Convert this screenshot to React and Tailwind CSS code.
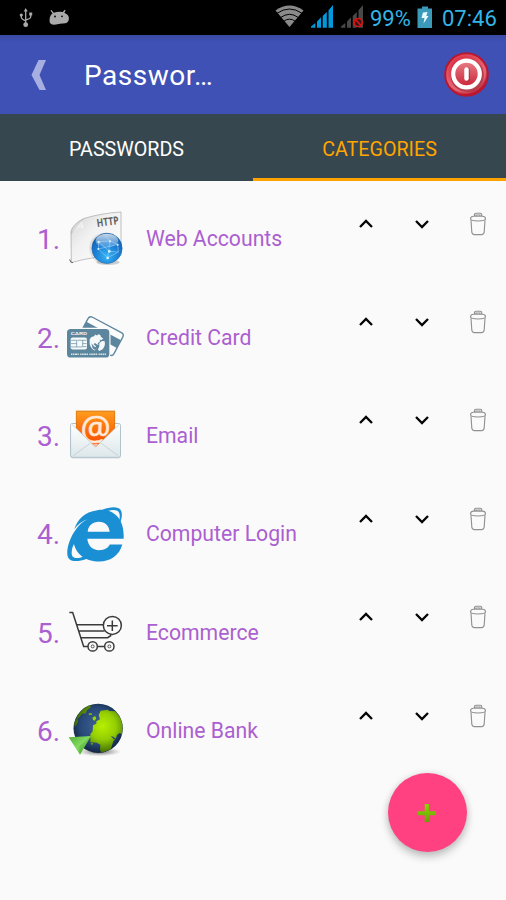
import React from "react";

function WebIcon() {
  return (
    <svg className="h-16 w-15" viewBox="138 33 180 192">
      <defs>
        <linearGradient id="paper" x1="0" y1="0" x2="1" y2="1">
          <stop offset="0" stopColor="#d2d2d2" />
          <stop offset="0.4" stopColor="#f1f1f1" />
          <stop offset="1" stopColor="#fff" />
        </linearGradient>
        <radialGradient id="ball" cx="0.5" cy="0.75" r="0.75">
          <stop offset="0" stopColor="#35b4f5" />
          <stop offset="0.55" stopColor="#1b7cd3" />
          <stop offset="1" stopColor="#125aa5" />
        </radialGradient>
        <linearGradient id="gloss" x1="0" y1="0" x2="0" y2="1">
          <stop offset="0" stopColor="#fff" stopOpacity="0.75" />
          <stop offset="1" stopColor="#fff" stopOpacity="0.1" />
        </linearGradient>
      </defs>
      <path d="M154 200 153 106Q160 84 190 68Q240 52 303 48V178Q220 180 154 200Z" fill="url(#paper)" stroke="#a5a5a5" strokeWidth="2" />
      <path d="M154 106Q158 84 189 70Q187 83 181 96Q166 97 154 112Z" fill="#d9d9d9" stroke="#aaa" strokeWidth="1.5" />
      <path d="M156 112Q168 98 190 96L188 72Z" fill="#fff" opacity="0.6" />
      <path d="M149 190Q150 201 159 200" stroke="#666" strokeWidth="3" fill="none" />
      <text x="232" y="93" fontSize="33" fontWeight="700" fill="#606060" fontFamily="Open Sans, sans-serif" textLength="66" lengthAdjust="spacingAndGlyphs" transform="rotate(-8 232 93)">HTTP</text>
      <ellipse cx="264" cy="199" rx="35" ry="8" fill="#777" opacity="0.35" />
      <circle cx="255" cy="157" r="47" fill="#888" opacity="0.22" />
      <circle cx="261" cy="157" r="45.5" fill="url(#ball)" stroke="#1763a8" strokeWidth="1.5" />
      <ellipse cx="261" cy="134" rx="34" ry="21" fill="url(#gloss)" />
      <g stroke="#b8e5ff" strokeWidth="1.6" fill="none" opacity="0.85">
        <path d="M236 137 270 135 293 145 295 168 263 185 235 159ZM270 135 263 185M236 137 268 166 295 168M235 159 293 145M270 135 255 118" />
      </g>
      <g fill="#d8f4ff"><circle cx="236" cy="138" r="3.5" /><circle cx="270" cy="136" r="3" /><circle cx="293" cy="146" r="3" /><circle cx="235" cy="159" r="3" /><circle cx="268" cy="166" r="4" /><circle cx="263" cy="186" r="4" /></g>
    </svg>
  );
}

function CardIcon() {
  return (
    <svg className="h-16 w-15" viewBox="138 13.2 180 192">
      <g transform="translate(243 106.500) rotate(28)">
        <rect x="-59" y="-38" width="118" height="76" rx="10" fill="#fcfcfc" stroke="#5c869d" strokeWidth="4" />
        <path d="M-59-17H59V9H-59Z" fill="#5c869d" />
      </g>
      <rect x="138.500" y="81.500" width="133" height="93" rx="14" fill="#fcfcfc" />
      <rect x="141" y="85" width="127" height="86" rx="11" fill="#5c869d" />
      <text x="152" y="103" fontSize="13" fontWeight="700" fill="#e9f1f5" fontFamily="Roboto, sans-serif" textLength="49" lengthAdjust="spacingAndGlyphs">CARD</text>
      <rect x="152" y="111" width="49" height="36" rx="6" fill="#f6f9fa" />
      <path d="M153 119H170V139H153M153 129H170M172 119H200M188 119V138M188 129H200M188 138H200M170 139H188" fill="none" stroke="#5c869d" strokeWidth="2" />
      <path d="M209 117Q214 107 223 107L225 102 231 105 235 101 241 103 243 109 250 114 243 119 239 117 240 123 233 128 236 133 230 131 225 127 221 131 227 136 229 146 224 150Q212 143 209 130Z" fill="#f6f9fa" />
      <path d="M238 127 246 121 254 122Q257 136 247 147L237 151 234 146 238 138Z" fill="#f6f9fa" />
      <path d="M214 128 224 139 231 140 226 149 218 143Z" fill="#5c869d" />
      <path d="M153 161H258" stroke="#d7e4ea" strokeWidth="4" strokeDasharray="4 1.500 5 1.500 6 1.500 4 4" />
    </svg>
  );
}

function MailIcon() {
  return (
    <svg className="h-16 w-15" viewBox="138 23.4 180 192">
      <defs>
        <linearGradient id="orange" x1="0" y1="0" x2="0" y2="1">
          <stop offset="0" stopColor="#ff9d1e" />
          <stop offset="0.9" stopColor="#f94d00" />
          <stop offset="1" stopColor="#ffb794" />
        </linearGradient>
        <linearGradient id="envelope" x1="0" y1="0" x2="0" y2="1">
          <stop offset="0" stopColor="#fff" />
          <stop offset="1" stopColor="#dde7ea" />
        </linearGradient>
      </defs>
      <rect x="152" y="90" width="150" height="100" rx="5" fill="#b5c5ce" opacity="0.5" />
      <rect x="152" y="85" width="149" height="101" rx="5" fill="url(#envelope)" stroke="#a8bac5" strokeWidth="3" />
      <path d="M168 47H285V103L230 156H223L168 103Z" fill="url(#orange)" />
      <path d="M169 103V48H284V103" fill="none" stroke="#c9741e" strokeWidth="2" />
      <text x="227" y="134" fontSize="101" textAnchor="middle" fill="#ffe9d8" stroke="#ffe9d8" strokeWidth="2" fontFamily="Open Sans, sans-serif">@</text>
      <path d="M154 85 222 151Q227 159 232 151L300 85V180Q300 184 296 184H158Q154 184 154 180Z" fill="url(#envelope)" />
      <path d="M155 87 222 151Q227 159 232 151L299 87" fill="none" stroke="#b3bec2" strokeWidth="2" />
      <path d="M160 181 211 144M294 181 243 144" stroke="#b9c5cb" strokeWidth="2" />
      <path d="M219 147Q227 145 235 147L228 156Z" fill="#ffb99c" />
    </svg>
  );
}

function ExplorerIcon() {
  return (
    <svg className="h-16 w-15" viewBox="138 18.6 180 192">
      <g fill="#1a8fd3">
        <path fillRule="evenodd" d="M163 100C172 72 193 48 232 43C277 36 311 66 311 118V129H202C204 151 218 163 237 163C254 163 265 156 269 146H307C298 178 272 197 238 197C198 197 164 175 160 133Q169 100 201 71Q179 78 163 100ZM203 108H269C267 89 255 78 237 78C218 78 205 89 203 108Z" />
        <path d="M244 43C272 31 296 31 303 44C308 54 305 70 300 81L297 76C301 62 300 50 292 45C282 40 265 43 252 50Z" />
        <path d="M202 71C176 79 140 133 142 175C144 199 167 201 203 188L193 181C169 191 154 188 155 170C155 160 159 149 164 141Z" />
      </g>
    </svg>
  );
}

function CartIcon() {
  return (
    <svg className="h-16 w-15" viewBox="138 13.8 180 192">
      <g fill="none" stroke="#3b3b3b" strokeWidth="4.500">
        <path d="M148 51H158L191 153H204M232 153H254M170 88H250M176 107H254M182 127H263L272 121V114" />
        <circle cx="277" cy="90" r="27" fill="#fcfcfc" />
        <path d="M261 91H293M277 75V107" />
        <circle cx="218" cy="153" r="14" />
        <circle cx="268" cy="153" r="14" />
        <circle cx="218" cy="153" r="4.500" strokeWidth="2.500" />
        <circle cx="268" cy="153" r="4.500" strokeWidth="2.500" />
      </g>
    </svg>
  );
}

function GlobeIcon() {
  return (
    <svg className="h-16 w-15" viewBox="138 24 180 192">
      <defs>
        <radialGradient id="sea" cx="0.5" cy="0.45" r="0.55">
          <stop offset="0" stopColor="#3e6296" />
          <stop offset="0.65" stopColor="#284978" />
          <stop offset="1" stopColor="#122541" />
        </radialGradient>
        <radialGradient id="land" gradientUnits="userSpaceOnUse" cx="248" cy="105" r="80">
          <stop offset="0" stopColor="#b7ef00" />
          <stop offset="0.5" stopColor="#94ce03" />
          <stop offset="1" stopColor="#416d05" />
        </radialGradient>
        <linearGradient id="pointer" x1="0" y1="0" x2="1" y2="1">
          <stop offset="0" stopColor="#52ad36" />
          <stop offset="0.5" stopColor="#83dc60" />
          <stop offset="1" stopColor="#3f9e26" />
        </linearGradient>
        <radialGradient id="ground">
          <stop offset="0" stopColor="#333" stopOpacity="0.8" />
          <stop offset="1" stopColor="#777" stopOpacity="0" />
        </radialGradient>
        <clipPath id="globeClip"><circle cx="234.500" cy="112" r="73" /></clipPath>
      </defs>
      <ellipse cx="238" cy="182" rx="66" ry="14" fill="url(#ground)" />
      <circle cx="234.500" cy="112" r="74" fill="url(#sea)" />
      <g clipPath="url(#globeClip)" fill="url(#land)">
        <path d="M242 59 263 56 268 60 286 61 310 90V132L299 126 291 132 288 142 280 151 272 176 260 181 245 186 240 176 241 161 230 155 211 153 211 130 218 121 219 103 229 98 229 91 240 85 236 72Z" />
        <path d="M177 62Q190 45 213 41L211 50 201 57 197 67 186 68 177 80 169 83ZM206 67 215 66 216 71 207 73ZM160 94 173 80 174 94 165 107ZM217 80 225 75 229 82 224 89 219 86ZM211 155H220L216 164Z" />
      </g>
      <path d="M272 134 279 137 289 144 281 145Z" fill="#284978" />
      <path d="M146 139 213 135 180 191Z" fill="url(#pointer)" />
      <path d="M180 191 177 166 213 135Z" fill="#2d8219" opacity="0.2" />
    </svg>
  );
}

const categories = [
  { name: "Web Accounts", Icon: WebIcon },
  { name: "Credit Card", Icon: CardIcon },
  { name: "Email", Icon: MailIcon },
  { name: "Computer Login", Icon: ExplorerIcon },
  { name: "Ecommerce", Icon: CartIcon },
  { name: "Online Bank", Icon: GlobeIcon },
];

function StatusBar() {
  return (
    <div className="flex h-[35px] items-center bg-black text-[22px] text-[#33b5e5]">
      <svg className="h-[35px] w-[85px] shrink-0" viewBox="0 0 85 35">
        <g fill="none" stroke="#aaa" strokeWidth="1.300">
          <path d="M25.700 10V25M21.300 15V17.500Q21.500 19 25.700 21M30.700 14V17Q30.500 18.700 25.700 20" />
        </g>
        <g fill="#aaa">
          <path d="M25.700 8 27.700 11.500H23.700Z" />
          <circle cx="25.700" cy="24.700" r="2.400" />
          <circle cx="21.300" cy="15" r="1.600" />
          <path d="M29.200 12.500H32.200V15.500H29.200Z" />
          <path d="M49.500 21Q49.300 15.500 52.500 13.500L50.500 10.500 51.500 10 53.700 12.800Q58.500 11 62.800 12L64.600 9.700 65.600 10.400 64.300 12.700Q69.300 14.800 68.900 19Q68.500 23.500 63 23.600Q60 23.500 58.500 24Q50 26.500 49.500 21Z" />
        </g>
        <circle cx="55" cy="16.500" r="0.900" fill="#000" /><circle cx="62" cy="16.300" r="0.900" fill="#000" />
      </svg>
      <svg className="ml-auto h-[35px] w-[94px] shrink-0" viewBox="272 0 94 35">
        <path d="M274.500 10.500Q288.500 .500 302.500 10.500L288.500 27Z" fill="#8a8a8a" />
        <g fill="none" stroke="#000" strokeWidth="1">
          <path d="M276 13.300Q288.500 4.700 301 13.300" />
          <path d="M279.500 17.600Q288.500 11 297.500 17.600" />
          <path d="M282.500 21.300Q288.500 17 294.500 21.300" />
        </g>
        <path d="M310 27.700V26.500L314.300 23V27.700ZM316 27.700V21.500L320 17.300V27.700ZM321.700 27.700V16L325.800 12V27.700ZM327.500 27.700V10.200L332 5V27.700Z" fill="#0099db" />
        <path d="M340 27.700V26.500L344.300 23V27.700ZM346 27.700V21.500L350 17.300V27.700ZM351.700 27.700V16L355.800 12V27.700ZM357.500 27.700V10.200L362 5V27.700Z" fill="#484848" />
        <circle cx="357.200" cy="22.500" r="4" fill="#2b1717" stroke="#db1212" strokeWidth="1.600" />
        <path d="M354.500 19.700 360 25.300" stroke="#db1212" strokeWidth="1.700" />
      </svg>
      <span className="ml-[3px] w-[42px] pt-px whitespace-nowrap">99%</span>
      <svg className="ml-[5px] h-[35px] w-4 shrink-0" viewBox="0 0 16 35">
        <path d="M5 6.500H11V8.500H15V28H.5V8.500H5Z" fill="#3b9aba" />
        <path d="M6 12.500 10.500 12 9.300 16H11.500L6.500 23.500 7.500 18H4.500Z" fill="#e8faff" />
      </svg>
      <span className="mr-2 ml-[9px] w-[56px] pt-px whitespace-nowrap">07:46</span>
    </div>
  );
}

function Header() {
  return (
    <header className="flex h-[79px] items-center bg-[linear-gradient(#3a4aa3,#3f51b5_7px)] pr-[17px] pl-[30px]">
      <svg className="h-8 w-4" viewBox="0 0 16 32">
        <path d="M8.500 1H16L9.500 16 16 31H9.500L1.500 16Z" fill="#a6afe0" />
      </svg>
      <h1 className="ml-[38px] pt-[3px] text-[28px] leading-8 font-normal tracking-[0.5px] text-white">Passwor…</h1>
      <svg className="ml-auto h-[45px] w-[45px]" viewBox="0 0 45 45">
        <defs>
          <radialGradient id="power" cx="0.45" cy="0.4" r="0.6">
            <stop offset="0.5" stopColor="#dc3549" />
            <stop offset="0.82" stopColor="#e66a76" />
            <stop offset="0.95" stopColor="#bd1a30" />
          </radialGradient>
          <linearGradient id="powerCore" x1="0" y1="0" x2="0" y2="1">
            <stop offset="0" stopColor="#e78088" />
            <stop offset="1" stopColor="#cb2337" />
          </linearGradient>
        </defs>
        <circle cx="22.500" cy="22.500" r="21.300" fill="url(#power)" stroke="#b91730" strokeWidth="2" />
        <circle cx="23.300" cy="23.500" r="14" fill="none" stroke="#7d1325" strokeOpacity="0.450" strokeWidth="5" />
        <circle cx="22.500" cy="22" r="13.300" fill="url(#powerCore)" stroke="#fff" strokeWidth="4.200" />
        <path d="M23.300 18V27" stroke="#86182a" strokeWidth="5" strokeLinecap="round" opacity="0.500" />
        <path d="M22.500 17.500V26.500" stroke="#fff" strokeWidth="4.500" strokeLinecap="round" />
      </svg>
    </header>
  );
}

function Chevron({ down = false }) {
  return (
    <svg className="h-4 w-4" viewBox="0 0 16 16">
      <path d={down ? "M2 5 8 11 14 5" : "M2 11 8 5 14 11"} fill="none" stroke="#050505" strokeWidth="2.300" />
    </svg>
  );
}

function TrashIcon() {
  return (
    <svg className="h-6 w-5" viewBox="0 0 20 24" fill="none" stroke="#919191" strokeWidth="1.150">
      <path d="M3 8.300 3.800 20Q4 22.600 6.500 22.600H13.500Q16 22.600 16.200 20L17 8.300" />
      <path d="M2.500 6.800Q2.800 4.200 5.500 4.200H14.500Q17.300 4.200 17.500 6.800Q17.500 9 10 9T2.500 6.800Z" />
      <path d="M6.500 4V2.300Q6.500 1.200 8 1.200H12.500Q13.700 1.200 13.700 2.500V4M8 4V3H12V4" />
    </svg>
  );
}

function CategoryRow({ index, name, Icon }) {
  return (
    <li className="flex h-[98.400px] items-center text-[#ab5fd0]">
      <span className="w-[66px] pt-[3px] pl-[37px] text-[28px] leading-8">{index}.</span>
      <Icon />
      <span className="ml-5 pt-px text-[21.200px] leading-7">{name}</span>
      <div className="mr-[18px] mb-[30px] ml-auto flex items-center">
        <Chevron />
        <span className="ml-10 flex"><Chevron down /></span>
        <span className="ml-[38.500px] flex"><TrashIcon /></span>
      </div>
    </li>
  );
}

export default function App() {
  return (
    <div className="relative h-[900px] w-[506px] overflow-hidden bg-[#fafafa] font-['Roboto',sans-serif]">
      <StatusBar />
      <Header />
      <nav className="grid h-[67px] grid-cols-2 bg-[#37474f] text-[19.700px]">
        <div className="flex items-center justify-center pt-[4px] text-white">PASSWORDS</div>
        <div className="flex items-center justify-center border-b-3 border-[#ffa300] pt-[7px] text-[#ffa500]">CATEGORIES</div>
      </nav>
      <ul className="pt-[8.500px]">
        {categories.map(({ name, Icon }, i) => (
          <CategoryRow key={name} index={i + 1} name={name} Icon={Icon} />
        ))}
      </ul>
      <button aria-label="Add category" className="absolute top-[773px] left-[388px] flex h-[79px] w-[79px] items-center justify-center rounded-full bg-[#ff4081] shadow-[0_5px_9px_rgba(0,0,0,0.22),0_0_7px_rgba(0,0,0,0.1)]">
        <svg className="mr-px h-5 w-5" viewBox="0 0 20 20">
          <defs>
            <linearGradient id="plus" x1="0" y1="0" x2="0" y2="1">
              <stop offset="0" stopColor="#8fd600" />
              <stop offset="1" stopColor="#62a400" />
            </linearGradient>
          </defs>
          <path d="M7.700 1H11.900V8.200H19V12.200H11.900V19H7.700V12.200H.7V8.200H7.700Z" fill="url(#plus)" />
        </svg>
      </button>
    </div>
  );
}
